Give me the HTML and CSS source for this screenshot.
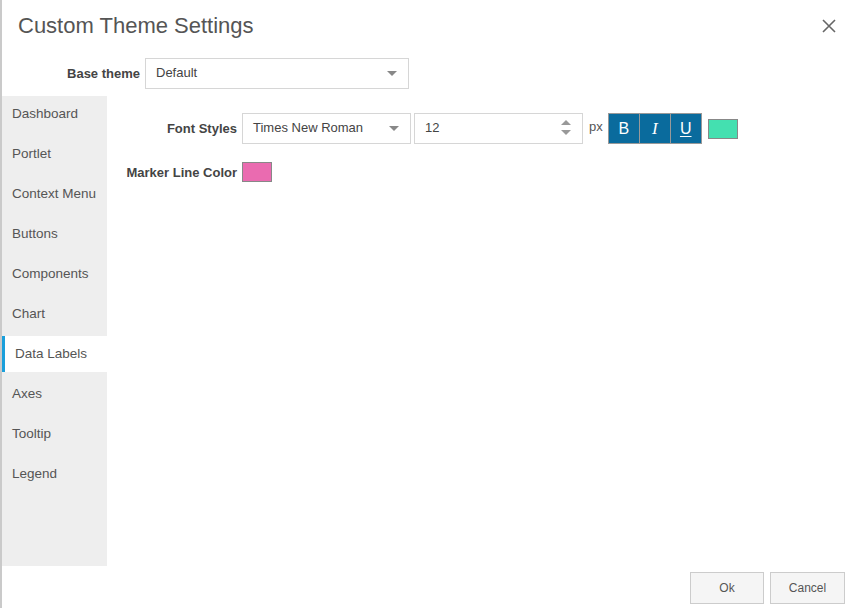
FILE: index.html
```html
<!DOCTYPE html>
<html>
<head>
<meta charset="utf-8">
<link rel="stylesheet" href="styles.css">
</head>
<body>
<div class="edge"></div>
<div class="dialog">
  <div class="header">
    <div class="title">Custom Theme Settings</div>
    <div class="close">
      <svg width="14" height="14" viewBox="0 0 14 14"><path d="M1 1L13 13M13 1L1 13" stroke="#666" stroke-width="1.6" fill="none"/></svg>
    </div>
  </div>
  <div class="base-row">
    <div class="base-label">Base theme</div>
    <div class="select base-select"><span>Default</span><span class="caret"></span></div>
  </div>
  <div class="main">
    <div class="sidebar">
      <div class="item">Dashboard</div>
      <div class="item">Portlet</div>
      <div class="item">Context Menu</div>
      <div class="item">Buttons</div>
      <div class="item">Components</div>
      <div class="item">Chart</div>
      <div class="item active">Data Labels</div>
      <div class="item">Axes</div>
      <div class="item">Tooltip</div>
      <div class="item">Legend</div>
    </div>
    <div class="content">
      <div class="row">
        <div class="label">Font Styles</div>
        <div class="select font-select"><span>Times New Roman</span><span class="caret"></span></div>
        <div class="select num-input"><span>12</span>
          <span class="spinner"><span class="up"></span><span class="down"></span></span>
        </div>
        <div class="unit">px</div>
        <div class="styles">
          <div class="sbtn b">B</div>
          <div class="sbtn i">I</div>
          <div class="sbtn u">U</div>
        </div>
        <div class="swatch teal"></div>
      </div>
      <div class="row marker-row">
        <div class="label">Marker Line Color</div>
        <div class="swatch pink"></div>
      </div>
    </div>
  </div>
  <div class="footer">
    <div class="btn ok">Ok</div>
    <div class="btn cancel">Cancel</div>
  </div>
</div>
</body>
</html>
```

FILE: styles.css
```css
html, body {
  margin: 0;
  padding: 0;
  height: 608px;
  overflow: hidden;
  background: #fff;
}
body {
  display: flex;
  font-family: "Liberation Sans", Arial, sans-serif;
}
.edge {
  width: 2px;
  height: 608px;
  background: #cacaca;
  flex: none;
}
.dialog {
  flex: 1;
  display: flex;
  flex-direction: column;
  height: 608px;
}
.header {
  height: 54px;
  display: flex;
  align-items: flex-start;
  justify-content: space-between;
  flex: none;
}
.title {
  padding-left: 16px;
  padding-top: 12px;
  line-height: 28px;
  font-size: 22px;
  color: #555;
}
.close {
  padding-top: 19px;
  padding-right: 12px;
}
.base-row {
  margin-top: 4px;
  display: flex;
  align-items: center;
  flex: none;
}
.base-label {
  width: 138px;
  text-align: right;
  font-size: 13px;
  font-weight: bold;
  color: #444;
  margin-right: 5px;
}
.select {
  box-sizing: border-box;
  height: 31px;
  border: 1px solid #d6d6d6;
  background: #fff;
  display: flex;
  align-items: center;
  justify-content: space-between;
  padding: 0 10px 0 10px;
  font-size: 13px;
  color: #444;
}
.select span:first-child {
  margin-top: -3px;
}
.base-select {
  width: 264px;
}
.caret {
  width: 0;
  height: 0;
  border-left: 5px solid transparent;
  border-right: 5px solid transparent;
  border-top: 5px solid #888;
  margin-right: 1px;
}
.main {
  margin-top: 7px;
  display: flex;
  flex: none;
  height: 470px;
}
.sidebar {
  width: 105px;
  background: #eeeeee;
  display: flex;
  flex-direction: column;
  gap: 4px;
}
.item {
  height: 36px;
  line-height: 36px;
  padding-left: 10px;
  font-size: 13.5px;
  color: #555;
}
.item.active {
  background: #fff;
  border-left: 3px solid #1a9fdb;
}
.content {
  flex: 1;
  padding-top: 17px;
}
.row {
  display: flex;
  align-items: center;
}
.label {
  width: 130px;
  text-align: right;
  font-size: 13px;
  font-weight: bold;
  color: #444;
  margin-right: 5px;
}
.font-select {
  width: 169px;
  margin-right: 3px;
}
.num-input {
  width: 169px;
  padding-right: 11px;
}
.spinner {
  display: flex;
  flex-direction: column;
  gap: 5px;
}
.spinner .up {
  width: 0; height: 0;
  border-left: 5px solid transparent;
  border-right: 5px solid transparent;
  border-bottom: 5px solid #999;
}
.spinner .down {
  width: 0; height: 0;
  border-left: 5px solid transparent;
  border-right: 5px solid transparent;
  border-top: 5px solid #999;
}
.unit {
  margin-left: 6px;
  margin-right: 5px;
  font-size: 13px;
  color: #555;
  margin-top: -4px;
}
.styles {
  display: flex;
  height: 31px;
  box-sizing: border-box;
  border: 1px solid #999;
  background: #999;
  gap: 1px;
}
.sbtn {
  width: 30px;
  height: 29px;
  background: #0a6b9d;
  color: #fff;
  display: flex;
  align-items: center;
  justify-content: center;
  font-size: 16px;
}
.sbtn.b { font-weight: normal; }
.sbtn.i { font-family: "Liberation Serif", serif; font-style: italic; font-size: 17px; }
.sbtn.u { text-decoration: underline; text-underline-offset: 2px; }
.swatch {
  width: 30px;
  height: 20px;
  box-sizing: border-box;
  border: 1px solid #888;
}
.teal {
  background: #44e0b0;
  margin-left: 6px;
}
.pink {
  background: #ea6bb0;
}
.marker-row {
  margin-top: 18px;
}
.footer {
  display: flex;
  justify-content: flex-end;
  gap: 6px;
  padding-right: 3px;
  margin-top: 6px;
}
.btn {
  box-sizing: border-box;
  height: 32px;
  border: 1px solid #ccc;
  background: #f5f5f5;
  color: #555;
  font-size: 12px;
  display: flex;
  align-items: center;
  justify-content: center;
}
.ok { width: 74px; }
.cancel { width: 75px; }
```
